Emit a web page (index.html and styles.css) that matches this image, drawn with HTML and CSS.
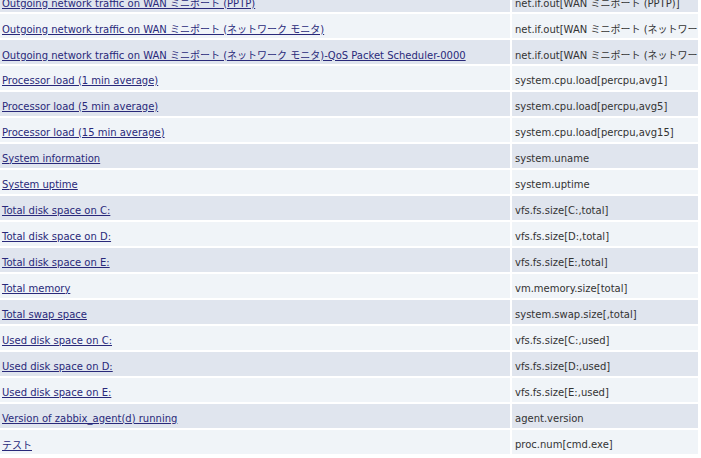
FILE: index.html
```html
<!DOCTYPE html>
<html lang="ja">
<head>
    <meta charset="UTF-8">
    <title>Items</title>
    <link rel="stylesheet" href="styles.css">
</head>
<body>
    <table class="items">
        <tr class="odd"><td class="name"><a href="#">Outgoing network traffic on WAN ミニポート (PPTP)</a></td><td class="key">net.if.out[WAN ミニポート (PPTP)]</td></tr>
        <tr class="even"><td class="name"><a href="#">Outgoing network traffic on WAN ミニポート (ネットワーク モニタ)</a></td><td class="key">net.if.out[WAN ミニポート (ネットワーク モニタ)]</td></tr>
        <tr class="odd"><td class="name"><a href="#">Outgoing network traffic on WAN ミニポート (ネットワーク モニタ)-QoS Packet Scheduler-0000</a></td><td class="key">net.if.out[WAN ミニポート (ネットワーク モニタ)-QoS Packet Scheduler-0000]</td></tr>
        <tr class="even"><td class="name"><a href="#">Processor load (1 min average)</a></td><td class="key">system.cpu.load[percpu,avg1]</td></tr>
        <tr class="odd"><td class="name"><a href="#">Processor load (5 min average)</a></td><td class="key">system.cpu.load[percpu,avg5]</td></tr>
        <tr class="even"><td class="name"><a href="#">Processor load (15 min average)</a></td><td class="key">system.cpu.load[percpu,avg15]</td></tr>
        <tr class="odd"><td class="name"><a href="#">System information</a></td><td class="key">system.uname</td></tr>
        <tr class="even"><td class="name"><a href="#">System uptime</a></td><td class="key">system.uptime</td></tr>
        <tr class="odd"><td class="name"><a href="#">Total disk space on C:</a></td><td class="key">vfs.fs.size[C:,total]</td></tr>
        <tr class="even"><td class="name"><a href="#">Total disk space on D:</a></td><td class="key">vfs.fs.size[D:,total]</td></tr>
        <tr class="odd"><td class="name"><a href="#">Total disk space on E:</a></td><td class="key">vfs.fs.size[E:,total]</td></tr>
        <tr class="even"><td class="name"><a href="#">Total memory</a></td><td class="key">vm.memory.size[total]</td></tr>
        <tr class="odd"><td class="name"><a href="#">Total swap space</a></td><td class="key">system.swap.size[,total]</td></tr>
        <tr class="even"><td class="name"><a href="#">Used disk space on C:</a></td><td class="key">vfs.fs.size[C:,used]</td></tr>
        <tr class="odd"><td class="name"><a href="#">Used disk space on D:</a></td><td class="key">vfs.fs.size[D:,used]</td></tr>
        <tr class="even"><td class="name"><a href="#">Used disk space on E:</a></td><td class="key">vfs.fs.size[E:,used]</td></tr>
        <tr class="odd"><td class="name"><a href="#">Version of zabbix_agent(d) running</a></td><td class="key">agent.version</td></tr>
        <tr class="even"><td class="name"><a href="#">テスト</a></td><td class="key">proc.num[cmd.exe]</td></tr>
    </table>
</body>
</html>
```

FILE: styles.css
```css
* {
    box-sizing: border-box;
}

html, body {
    margin: 0;
    padding: 0;
    overflow: hidden;
    background: #ffffff;
}

body {
    font-family: "DejaVu Sans", "Noto Sans CJK JP", sans-serif;
    font-size: 10px;
}

.items {
    border-collapse: separate;
    border-spacing: 2px;
    margin: -14px 0 0 -2px;
    width: 702px;
    table-layout: fixed;
}

.items td {
    height: 24px;
    padding: 4px 3px 0;
    white-space: nowrap;
    overflow: hidden;
    vertical-align: middle;
}

.items td.name {
    width: 510px;
    padding-left: 2px;
}

.items td.key {
    color: #333333;
}

.odd td {
    background: #e0e5ee;
}

.even td {
    background: #f0f4f8;
}

.items a {
    color: #29297a;
    text-decoration: underline;
}
```
